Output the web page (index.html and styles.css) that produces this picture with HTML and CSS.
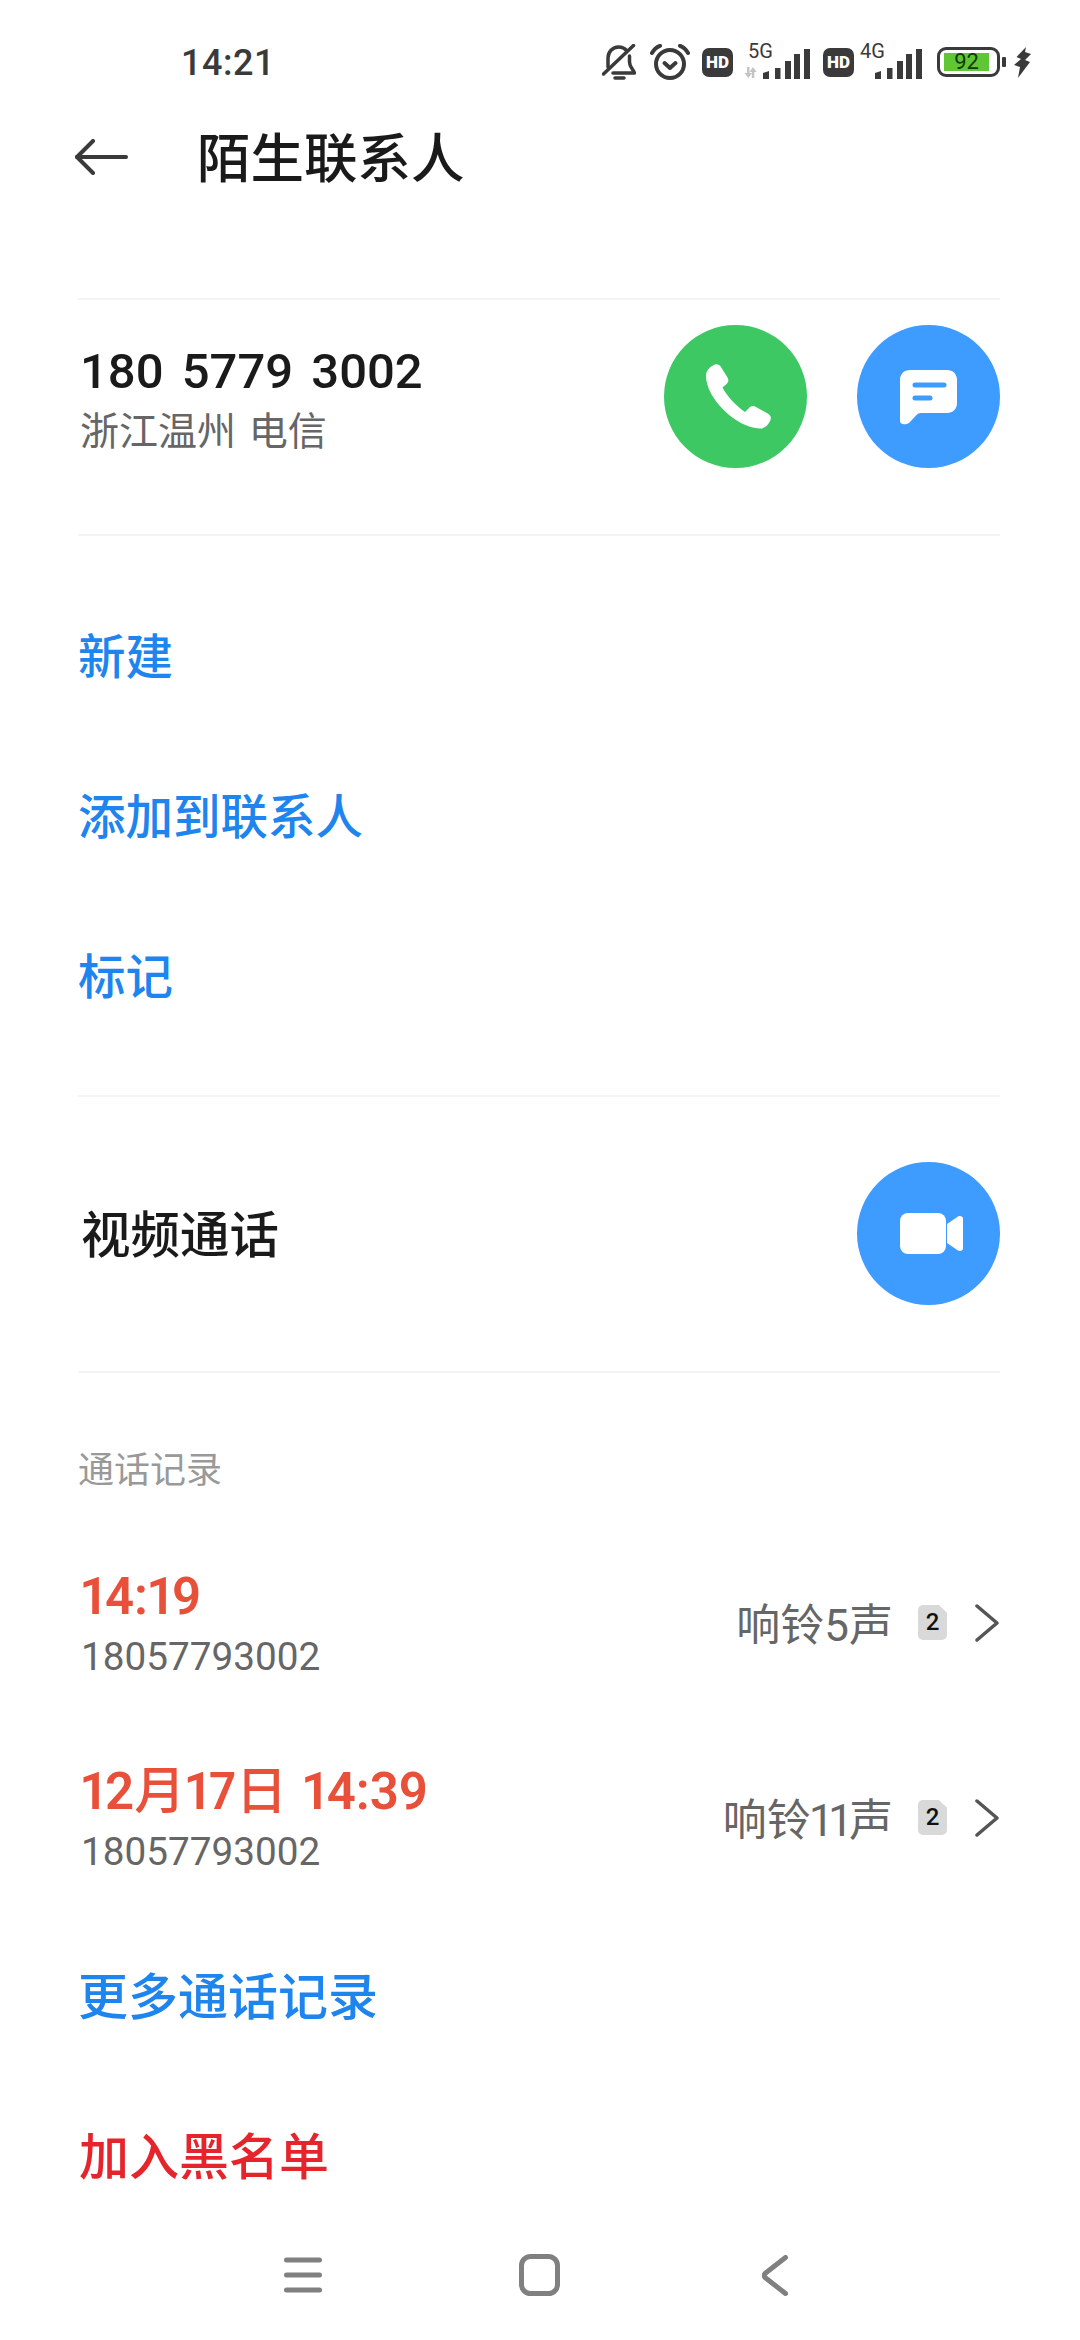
FILE: index.html
```html
<!DOCTYPE html>
<html lang="zh-CN">
  <head>
    <meta charset="UTF-8" />
    <meta name="viewport" content="width=device-width, initial-scale=1.0" />
    <title>陌生联系人</title>
    <link rel="stylesheet" href="styles.css">
  </head>
  <body>
    <div class="page">
      <div class="status-bar">
        <span class="clock">14:21</span>
        <div class="status-icons">
          <svg class="ic-bell" width="34" height="36" viewBox="0 0 34 36" fill="none" stroke="#3a3a3a" stroke-width="3.500" stroke-linecap="round" stroke-linejoin="round">
            <path d="M6 23V14C6 8 10.500 3 16.500 3C20 3 23 4.500 25 7" />
            <path d="M27.500 12V18C27.500 23 31 25 32.500 29H11" />
            <path d="M13 34H22" />
            <path d="M1.500 30L31.500 1.500" />
          </svg>
          <svg class="ic-alarm" width="40" height="36" viewBox="0 0 40 36" fill="none" stroke="#3a3a3a" stroke-width="4" stroke-linecap="round" stroke-linejoin="round">
            <circle cx="20" cy="20" r="14" />
            <path d="M14.500 19L20 24L25.500 19" />
            <path d="M2 9C4 5.500 6.500 3 10 1.800" />
            <path d="M38 9C36 5.500 33.500 3 30 1.800" />
          </svg>
          <span class="hd hd-first">HD</span>
          <div class="signal signal-5g">
            <span class="signal-label">5G</span>
            <svg width="67" height="34" viewBox="0 0 67 34" fill="#3a3a3a">
              <path d="M19 28l6-2v8h-6zM31 23h5.500v11H31zM41 16h6v18h-6zM50 9h6v25h-6zM60 4h6v30h-6z" />
              <path fill="#c4c4c4" d="M3 22h2.500v6h2.500l-3.700 5L0.500 28H3zM9 22l3.700 5h-2.400v6H7.800v-6H5.500z" />
            </svg>
          </div>
          <span class="hd hd-second">HD</span>
          <div class="signal signal-4g">
            <span class="signal-label">4G</span>
            <svg width="63" height="34" viewBox="0 0 63 34" fill="#3a3a3a">
              <path d="M15 28l6-2v8h-6zM27 23h5.500v11H27zM37 16h6v18h-6zM46 9h6v25h-6zM56 4h6v30h-6z" />
            </svg>
          </div>
          <div class="battery">
            <div class="battery-body">
              <div class="battery-fill">92</div>
            </div>
            <div class="battery-tip"></div>
          </div>
          <svg class="ic-bolt" width="17" height="31" viewBox="0 0 17 31" fill="#3a3a3a">
            <path d="M12 0L2.500 10L7 12L0 18L6 20L4 31L16 15L11 13L17 7L11 5Z" />
          </svg>
        </div>
      </div>

      <div class="title-bar">
        <svg class="back-arrow" width="53" height="36" viewBox="0 0 53 36" fill="none" stroke="#3a3a3a" stroke-width="4" stroke-linecap="round" stroke-linejoin="round">
          <path d="M18 2L2 18L18 34" />
          <path d="M2 18H51" />
        </svg>
        <h1>陌生联系人</h1>
      </div>

      <div class="section contact">
        <div class="contact-info">
          <div class="number">180 5779 3002</div>
          <div class="place">浙江温州 电信</div>
        </div>
        <div class="round-btn green">
          <svg width="143" height="143" viewBox="0 0 143 143" fill="#fff">
            <path transform="translate(42 39)" d="M7 1.500C10-0.500 13 0 15 3L21.500 13.500C23 16 22.500 18 20.500 20L16.500 23.500C20 31 31 43 39 48L43.500 43.500C45.500 41.500 48 41.500 50 43L62.500 50C65 52 65.500 54 64 57C62 61 59 64.500 54 64.500C30 64 0 34 0 12C0 7 3 3.500 7 1.500Z" />
          </svg>
        </div>
        <div class="round-btn blue">
          <svg width="143" height="143" viewBox="0 0 143 143" fill="#fff">
            <path d="M53 45H90C96 45 100 49 100 55V78C100 84 96 88 90 88H64C62 88 60.500 88.700 59.500 90L52 98C49 100 43 100 43 96V55C43 49 47 45 53 45Z" />
            <path d="M58 60H87M58 73H73" stroke="#3e9bff" stroke-width="5" stroke-linecap="round" />
          </svg>
        </div>
      </div>

      <div class="section actions">
        <a class="link-row" href="#">新建</a>
        <a class="link-row" href="#">添加到联系人</a>
        <a class="link-row" href="#">标记</a>
      </div>

      <div class="section video">
        <div class="video-label">视频通话</div>
        <div class="round-btn blue">
          <svg width="143" height="143" viewBox="0 0 143 143" fill="#fff">
            <rect x="43" y="51" width="46" height="41" rx="8" />
            <path d="M90 62L101 54.500C103 53.500 106 54 106 57V86C106 89 103 89.500 101 88.500L90 81Z" />
          </svg>
        </div>
      </div>

      <div class="section calls">
        <div class="calls-label">通话记录</div>

        <div class="call-row">
          <div class="call-left">
            <div class="call-time">14:19</div>
            <div class="call-number">18057793002</div>
          </div>
          <div class="call-ring">响铃5声</div>
          <div class="sim-badge">2</div>
          <svg class="chevron" width="24" height="38" viewBox="0 0 24 38" fill="none" stroke="#555" stroke-width="3.500" stroke-linecap="round" stroke-linejoin="round">
            <path d="M2 2L22 19L2 36" />
          </svg>
        </div>

        <div class="call-row">
          <div class="call-left">
            <div class="call-time">12<span class="cjk">月</span>17<span class="cjk">日</span> 14:39</div>
            <div class="call-number">18057793002</div>
          </div>
          <div class="call-ring">响铃11声</div>
          <div class="sim-badge">2</div>
          <svg class="chevron" width="24" height="38" viewBox="0 0 24 38" fill="none" stroke="#555" stroke-width="3.500" stroke-linecap="round" stroke-linejoin="round">
            <path d="M2 2L22 19L2 36" />
          </svg>
        </div>

        <a class="link-row big" href="#">更多通话记录</a>
        <a class="link-row big danger" href="#">加入黑名单</a>
      </div>

      <div class="nav-bar">
        <svg class="nav-menu" width="38" height="36" viewBox="0 0 38 36" fill="none" stroke="#808080" stroke-width="5" stroke-linecap="round">
          <path d="M2.500 3H35.500M2.500 18H35.500M2.500 33H35.500" />
        </svg>
        <svg class="nav-home" width="41" height="42" viewBox="0 0 41 42" fill="none" stroke="#808080" stroke-width="5">
          <rect x="2.500" y="2.500" width="36" height="37" rx="9" />
        </svg>
        <svg class="nav-back" width="26" height="41" viewBox="0 0 26 41" fill="none" stroke="#808080" stroke-width="5" stroke-linecap="round" stroke-linejoin="round">
          <path d="M23.500 2.500L3 18.500Q1.500 20.500 3 22.500L23.500 38.500" />
        </svg>
      </div>
    </div>
  </body>
</html>
```

FILE: styles.css
```css
* {
  margin: 0;
  padding: 0;
  box-sizing: border-box;
}

body {
  font-family: Roboto, "Noto Sans CJK SC", sans-serif;
  background: #ffffff;
  color: #1a1a1a;
}

a {
  text-decoration: none;
}

.page {
  width: 1080px;
  height: 2340px;
  display: flex;
  flex-direction: column;
  overflow: hidden;
}

/* Status bar */
.status-bar {
  height: 124px;
  padding: 0 49px 0 181px;
  display: flex;
  align-items: center;
  flex-shrink: 0;
}

.clock {
  padding-top: 2px;
  font-size: 36px;
  font-weight: 500;
  color: #3a3a3a;
  letter-spacing: 0.5px;
}

.status-icons {
  margin-left: auto;
  display: flex;
  align-items: center;
}

.hd {
  width: 31px;
  height: 29px;
  border-radius: 7px;
  background: #3a3a3a;
  color: #fff;
  font-size: 17px;
  font-weight: 900;
  text-align: center;
  line-height: 29px;
}

.ic-alarm {
  margin-left: 14px;
}

.hd-first {
  margin-left: 12px;
}

.signal {
  position: relative;
  height: 34px;
}

.signal-5g {
  margin-left: 11px;
}

.hd-second {
  margin-left: 12px;
}

.signal-4g {
  margin-left: 6px;
}

.signal-label {
  position: absolute;
  left: 4px;
  top: -4px;
  font-size: 20px;
  line-height: 20px;
  color: #3a3a3a;
}

.signal-4g .signal-label {
  left: 0;
}

.battery {
  margin-left: 14px;
  display: flex;
  align-items: center;
}

.battery-body {
  width: 63px;
  height: 30px;
  border: 3px solid #3a3a3a;
  border-radius: 9px;
  padding: 3px 8px 3px 4px;
}

.battery-fill {
  height: 100%;
  background: #5fc733;
  color: #123a0c;
  font-size: 22px;
  line-height: 18px;
  text-align: center;
}

.battery-tip {
  width: 4px;
  height: 10px;
  margin-left: 2px;
  border-radius: 1px;
  background: #3a3a3a;
}

.ic-bolt {
  margin-left: 8px;
}

/* Title */
.title-bar {
  height: 66px;
  padding-left: 75px;
  display: flex;
  align-items: center;
  flex-shrink: 0;
}

h1 {
  margin-left: 69px;
  padding-bottom: 5px;
  font-size: 53.500px;
  font-weight: 500;
  color: #1a1a1a;
}

/* Sections */
.section {
  margin: 0 80px 0 78px;
  border-top: 2px solid #f4f4f4;
  flex-shrink: 0;
}

.contact {
  margin-top: 108px;
  height: 236px;
  padding: 25px 0 0 2px;
  display: flex;
}

.contact-info {
  flex: 1;
}

.number {
  margin-top: 19px;
  font-size: 49px;
  line-height: 56px;
  font-weight: 500;
  word-spacing: 6px;
  color: #1a1a1a;
}

.place {
  margin-top: 7px;
  font-size: 39px;
  line-height: 50px;
  word-spacing: 3px;
  color: #666;
}

.round-btn {
  width: 143px;
  height: 143px;
  border-radius: 50%;
  flex-shrink: 0;
}

.round-btn svg {
  display: block;
}

.green {
  background: #3ec863;
  margin-right: 50px;
}

.blue {
  background: #3e9bff;
}

.actions {
  height: 561px;
  padding-top: 40px;
}

.link-row {
  height: 160px;
  padding-bottom: 5px;
  display: flex;
  align-items: center;
  font-size: 47.500px;
  font-weight: 500;
  color: #1e84ee;
}

.big {
  font-size: 50px;
}

.danger {
  padding-left: 1px;
  color: #e5242b;
}

.video {
  height: 276px;
  padding: 65px 0 0 3px;
  display: flex;
}

.video-label {
  flex: 1;
  height: 143px;
  padding-top: 3px;
  font-size: 49.500px;
  line-height: 143px;
  font-weight: 500;
}

/* Call log */
.calls {
  flex: 1;
  min-height: 0;
  padding-top: 74px;
}

.calls-label {
  margin-bottom: 30px;
  font-size: 36px;
  line-height: 48px;
  color: #999;
}

.call-row {
  height: 195px;
  padding-left: 3px;
  display: flex;
  align-items: center;
}

.call-left {
  flex: 1;
  padding-top: 8px;
}

.call-time {
  font-size: 51px;
  line-height: 60px;
  font-weight: 600;
  word-spacing: 3px;
  font-variant-numeric: proportional-nums;
  color: #e8503a;
}

.cjk {
  font-weight: 500;
}

.call-number {
  font-size: 38.700px;
  line-height: 60px;
  color: #666;
}

.call-ring {
  padding-bottom: 2px;
  font-size: 44px;
  font-variant-numeric: proportional-nums;
  color: #666;
}

.sim-badge {
  width: 29px;
  height: 35px;
  margin-left: 25px;
  border-radius: 5px;
  background: #d9d9d9;
  color: #111;
  font-size: 24px;
  font-weight: 500;
  line-height: 35px;
  text-align: center;
  clip-path: polygon(0 0, 72% 0, 100% 22%, 100% 100%, 0 100%);
}

.chevron {
  margin-left: 28px;
  margin-right: 1px;
}

/* Navigation */
.nav-bar {
  height: 130px;
  padding-left: 284px;
  display: flex;
  align-items: center;
  flex-shrink: 0;
}

.nav-home {
  margin-left: 197px;
}

.nav-back {
  margin-left: 202px;
}
```
